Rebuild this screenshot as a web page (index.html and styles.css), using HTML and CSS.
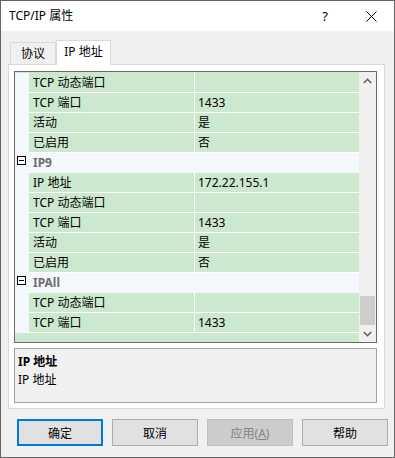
FILE: index.html
```html
<!DOCTYPE html>
<html lang="zh-CN">
<head>
<meta charset="utf-8">
<title>TCP/IP 属性</title>
<link rel="stylesheet" href="styles.css">
</head>
<body>
<div class="window">
  <div class="titlebar">
    <span class="title">TCP/IP 属性</span>
    <span class="help">?</span>
    <svg class="close" width="11" height="11" viewBox="0 0 11 11"><path d="M0.5 0.5 L10.5 10.5 M10.5 0.5 L0.5 10.5" stroke="#000" stroke-width="1" fill="none"/></svg>
  </div>
  <div class="content">
    <div class="tabs">
      <div class="tab">协议</div>
      <div class="tab active">IP 地址</div>
    </div>
    <div class="panel">
      <div class="grid">
        <div class="rows">
          <div class="row"><div class="gutter"></div><div class="name">TCP 动态端口</div><div class="value"></div></div>
          <div class="row"><div class="gutter"></div><div class="name">TCP 端口</div><div class="value">1433</div></div>
          <div class="row"><div class="gutter"></div><div class="name">活动</div><div class="value">是</div></div>
          <div class="row"><div class="gutter"></div><div class="name">已启用</div><div class="value">否</div></div>
          <div class="row cat"><div class="gutter"><span class="minus"></span></div><div class="cat-name">IP9</div></div>
          <div class="row"><div class="gutter"></div><div class="name">IP 地址</div><div class="value">172.22.155.1</div></div>
          <div class="row"><div class="gutter"></div><div class="name">TCP 动态端口</div><div class="value"></div></div>
          <div class="row"><div class="gutter"></div><div class="name">TCP 端口</div><div class="value">1433</div></div>
          <div class="row"><div class="gutter"></div><div class="name">活动</div><div class="value">是</div></div>
          <div class="row"><div class="gutter"></div><div class="name">已启用</div><div class="value">否</div></div>
          <div class="row cat"><div class="gutter"><span class="minus"></span></div><div class="cat-name">IPAll</div></div>
          <div class="row"><div class="gutter"></div><div class="name">TCP 动态端口</div><div class="value"></div></div>
          <div class="row"><div class="gutter"></div><div class="name">TCP 端口</div><div class="value">1433</div></div>
        </div>
        <div class="scrollbar">
          <div class="sb-btn"><svg width="9" height="6" viewBox="0 0 9 6"><path d="M0.8 5 L4.5 1.3 L8.2 5" stroke="#606060" stroke-width="1.6" fill="none"/></svg></div>
          <div class="sb-track"><div class="sb-thumb"></div></div>
          <div class="sb-btn"><svg width="9" height="6" viewBox="0 0 9 6"><path d="M0.8 1 L4.5 4.7 L8.2 1" stroke="#606060" stroke-width="1.6" fill="none"/></svg></div>
        </div>
      </div>
      <div class="desc">
        <div class="desc-title">IP 地址</div>
        <div class="desc-text">IP 地址</div>
      </div>
    </div>
    <div class="buttons">
      <button class="btn default">确定</button>
      <button class="btn">取消</button>
      <button class="btn disabled">应用(<u>A</u>)</button>
      <button class="btn">帮助</button>
    </div>
  </div>
</div>
</body>
</html>
```
FILE: styles.css
```css
* { box-sizing: border-box; }
html, body { margin: 0; padding: 0; background: #f0f0f0; }
body {
  font-family: "Segoe UI", "Noto Sans", "Noto Sans CJK SC", sans-serif;
  font-size: 12px;
  color: #000;
}
.window {
  width: 395px;
  height: 458px;
  border: 1px solid #646464;
  background: #f0f0f0;
  display: flex;
  flex-direction: column;
}
.titlebar {
  height: 30px;
  background: #fff;
  display: flex;
  align-items: center;
  padding-left: 8px;
  flex-shrink: 0;
}
.title { flex: 1; font-size: 12px; line-height: 16px; }
.help { font-size: 13px; margin-right: 38px; line-height: 16px; }
.close { margin-right: 17px; }
.content { display: flex; flex-direction: column; }
.tabs {
  display: flex;
  align-items: flex-end;
  margin-top: 9px;
  margin-left: 9px;
  height: 24px;
  position: relative;
  z-index: 1;
}
.tab {
  width: 46px;
  height: 22px;
  border: 1px solid #d9d9d9;
  border-bottom: none;
  background: #f0f0f0;
  text-align: center;
  line-height: 20px;
  padding-top: 1px;
}
.tab.active {
  width: 55px;
  height: 25px;
  background: #fff;
  margin-bottom: -1px;
  line-height: 21px;
  padding-top: 0;
}
.panel {
  margin-left: 7px;
  width: 377px;
  height: 345px;
  border: 1px solid #d9d9d9;
  background: #fff;
  padding: 6px 7px 5px 5px;
  display: flex;
  flex-direction: column;
}
.grid {
  width: 363px;
  height: 272px;
  border: 1px solid #696969;
  background: #cce8cf;
  display: flex;
  flex-shrink: 0;
}
.rows {
  width: 344px;
  padding-top: 1px;
  overflow: hidden;
}
.row {
  display: grid;
  grid-template-columns: 14px 166px 164px;
  height: 20px;
}
.gutter { background: #f4f7fc; position: relative; }
.name, .value {
  border-bottom: 1px solid #fff;
  line-height: 19px;
  white-space: nowrap;
}
.name { border-right: 1px solid #fff; padding-left: 4px; }
.value { padding-left: 3px; }
.row.cat { background: #f4f7fc; }
.cat-name {
  grid-column: 2 / 4;
  padding-left: 4px;
  line-height: 19px;
  font-weight: bold;
  color: #6d6d6d;
}
.minus {
  position: absolute;
  left: 2px;
  top: 3px;
  width: 9px;
  height: 9px;
  border: 1px solid #000;
  background: #fff;
}
.minus::after {
  content: "";
  position: absolute;
  left: 1px;
  right: 1px;
  top: 3px;
  height: 1px;
  background: #000;
}
.scrollbar {
  width: 17px;
  background: #f0f0f0;
  display: flex;
  flex-direction: column;
}
.sb-btn {
  height: 17px;
  display: flex;
  align-items: center;
  justify-content: center;
  flex-shrink: 0;
}
.sb-track { flex: 1; padding-top: 207px; }
.sb-thumb {
  margin-left: 1px;
  width: 15px;
  height: 29px;
  background: #cdcdcd;
}
.desc {
  margin-top: 5px;
  width: 363px;
  height: 55px;
  border: 1px solid #a0a0a0;
  background: #f0f0f0;
  padding: 4px 3px 0;
  line-height: 18px;
}
.desc-title { font-weight: bold; }
.buttons {
  display: flex;
  gap: 9px;
  margin-top: 10px;
  margin-left: 16px;
}
.btn {
  width: 86px;
  height: 27px;
  border: 1px solid #adadad;
  background: #e1e1e1;
  font-family: inherit;
  font-size: 12px;
  color: #000;
  padding: 0;
  margin: 0;
}
.btn.default { border: 2px solid #0078d7; }
.btn.disabled {
  background: #cccccc;
  border-color: #bfbfbf;
  color: #838383;
}
```
